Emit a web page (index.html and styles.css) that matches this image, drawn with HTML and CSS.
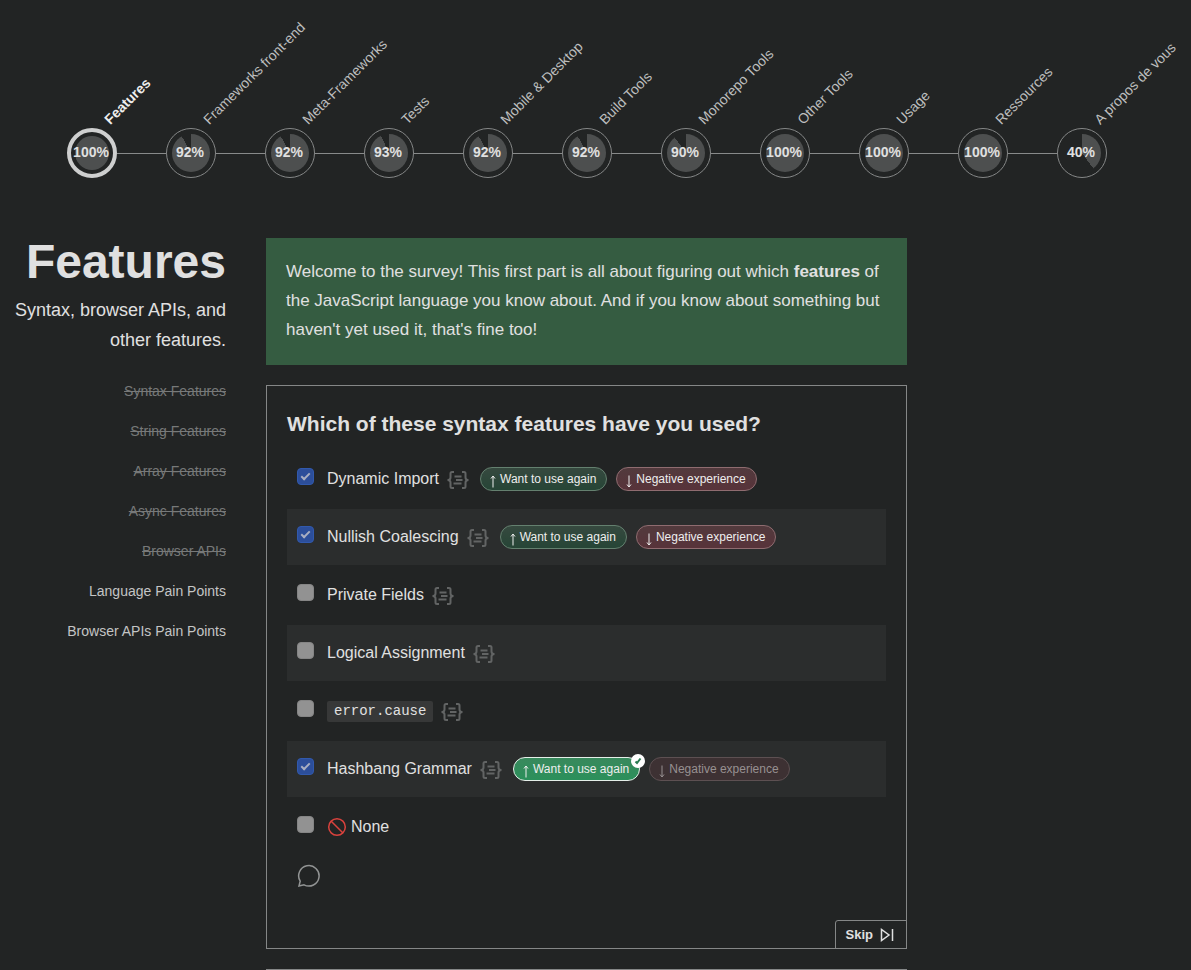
FILE: index.html
```html
<!DOCTYPE html>
<html lang="fr">
<head>
<meta charset="utf-8">
<meta name="viewport" content="width=device-width, initial-scale=1">
<title>Features</title>
<link rel="stylesheet" href="styles.css">
</head>
<body>
<svg class="sprite" aria-hidden="true">
  <symbol id="braces" viewBox="0 0 22 18"><path d="M7 1H5Q3.500 1 3.500 2.500V6.500Q3.500 9 0.500 9Q3.500 9 3.500 11.500V15.500Q3.500 17 5 17H7M15 1H17Q18.500 1 18.500 2.500V6.500Q18.500 9 21.500 9Q18.500 9 18.500 11.500V15.500Q18.500 17 17 17H15M7.500 5.500H14.500M9 9H15.500M6.500 12.500H14.500"/></symbol>
  <symbol id="up" viewBox="0 0 6 13"><path d="M3 12.500V1M1 3.500L3 1L5 3.500"/></symbol>
  <symbol id="down" viewBox="0 0 6 13"><path d="M3 0.500V12M1 9.500L3 12L5 9.500"/></symbol>
</svg>

<nav class="steps" aria-label="Sections">
  <ol class="steps-list">
    <li class="step current"><a href="#features"><span class="step-name">Features</span><span class="ring"><span class="pie full"></span><span class="percent">100%</span></span></a></li>
    <li class="step"><a href="#frontend"><span class="step-name">Frameworks front-end</span><span class="ring"><span class="pie p92"></span><span class="percent">92%</span></span></a></li>
    <li class="step"><a href="#meta"><span class="step-name">Meta-Frameworks</span><span class="ring"><span class="pie p92"></span><span class="percent">92%</span></span></a></li>
    <li class="step"><a href="#tests"><span class="step-name">Tests</span><span class="ring"><span class="pie p93"></span><span class="percent">93%</span></span></a></li>
    <li class="step"><a href="#mobile"><span class="step-name">Mobile &amp; Desktop</span><span class="ring"><span class="pie p92"></span><span class="percent">92%</span></span></a></li>
    <li class="step"><a href="#build"><span class="step-name">Build Tools</span><span class="ring"><span class="pie p92"></span><span class="percent">92%</span></span></a></li>
    <li class="step"><a href="#monorepo"><span class="step-name">Monorepo Tools</span><span class="ring"><span class="pie p90"></span><span class="percent">90%</span></span></a></li>
    <li class="step"><a href="#other"><span class="step-name">Other Tools</span><span class="ring"><span class="pie full"></span><span class="percent">100%</span></span></a></li>
    <li class="step"><a href="#usage"><span class="step-name">Usage</span><span class="ring"><span class="pie full"></span><span class="percent">100%</span></span></a></li>
    <li class="step"><a href="#resources"><span class="step-name">Ressources</span><span class="ring"><span class="pie full"></span><span class="percent">100%</span></span></a></li>
    <li class="step"><a href="#about"><span class="step-name">A propos de vous</span><span class="ring"><span class="pie p40"></span><span class="percent">40%</span></span></a></li>
  </ol>
</nav>

<div class="layout">
  <aside class="sidebar">
    <h1>Features</h1>
    <p class="summary">Syntax, browser APIs, and other features.</p>
    <ul class="toc">
      <li><a class="done" href="#syntax">Syntax Features</a></li>
      <li><a class="done" href="#string">String Features</a></li>
      <li><a class="done" href="#array">Array Features</a></li>
      <li><a class="done" href="#async">Async Features</a></li>
      <li><a class="done" href="#browser">Browser APIs</a></li>
      <li><a href="#language-pain">Language Pain Points</a></li>
      <li><a href="#browser-pain">Browser APIs Pain Points</a></li>
    </ul>
  </aside>

  <main class="content">
    <p class="intro">Welcome to the survey! This first part is all about figuring out which <strong>features</strong> of the JavaScript language you know about. And if you know about something but haven't yet used it, that's fine too!</p>

    <section class="question" id="syntax">
      <h2>Which of these syntax features have you used?</h2>
      <ul class="options">
        <li class="option">
          <input type="checkbox" id="o1" checked><label for="o1">Dynamic Import</label>
          <svg class="braces"><use href="#braces"/></svg>
          <span class="feedback">
            <button class="pill good" type="button"><svg class="arrow"><use href="#up"/></svg>Want to use again</button>
            <button class="pill bad" type="button"><svg class="arrow"><use href="#down"/></svg>Negative experience</button>
          </span>
        </li>
        <li class="option">
          <input type="checkbox" id="o2" checked><label for="o2">Nullish Coalescing</label>
          <svg class="braces"><use href="#braces"/></svg>
          <span class="feedback">
            <button class="pill good" type="button"><svg class="arrow"><use href="#up"/></svg>Want to use again</button>
            <button class="pill bad" type="button"><svg class="arrow"><use href="#down"/></svg>Negative experience</button>
          </span>
        </li>
        <li class="option">
          <input type="checkbox" id="o3"><label for="o3">Private Fields</label>
          <svg class="braces"><use href="#braces"/></svg>
        </li>
        <li class="option">
          <input type="checkbox" id="o4"><label for="o4">Logical Assignment</label>
          <svg class="braces"><use href="#braces"/></svg>
        </li>
        <li class="option">
          <input type="checkbox" id="o5"><label for="o5"><code>error.cause</code></label>
          <svg class="braces"><use href="#braces"/></svg>
        </li>
        <li class="option">
          <input type="checkbox" id="o6" checked><label for="o6">Hashbang Grammar</label>
          <svg class="braces"><use href="#braces"/></svg>
          <span class="feedback">
            <button class="pill good selected" type="button"><svg class="arrow"><use href="#up"/></svg>Want to use again<span class="badge"><svg viewBox="0 0 14 14"><path d="M4.500 7.500L6 9L9.500 4.500"/></svg></span></button>
            <button class="pill bad faded" type="button"><svg class="arrow"><use href="#down"/></svg>Negative experience</button>
          </span>
        </li>
        <li class="option">
          <input type="checkbox" id="o7"><label for="o7" class="none"><svg class="forbidden" viewBox="0 0 20 20"><circle cx="10" cy="10" r="8.300"/><path d="M4 4L16 16"/></svg>None</label>
        </li>
      </ul>
      <button class="comment" type="button" aria-label="Comment"><svg viewBox="0 0 24 24"><path d="M2 22L3.200 17.200A10.200 10.200 0 1 1 7 20.800Z"/></svg></button>
      <button class="skip" type="button">Skip<svg viewBox="0 0 14 14"><path d="M1.500 1.500V12.500L9 7ZM12.500 1V13"/></svg></button>
    </section>
    <section class="question next"></section>
  </main>
</div>
</body>
</html>
```

FILE: styles.css
```css
*, *::before { box-sizing: border-box; }

body {
  margin: 0;
  background: #222424;
  color: #e0e0e0;
  font-family: "Liberation Sans", Arial, sans-serif;
}

a { color: inherit; text-decoration: none; }
ul, ol { list-style: none; margin: 0; padding: 0; }
button { font-family: inherit; color: inherit; }
.sprite { display: none; }

.steps { padding: 128px 67px 60px; }
.steps-list { display: flex; }
.step { display: flex; align-items: center; }
.step a { position: relative; display: block; }
.step + .step::before { content: ""; width: 49px; height: 1px; background: #888a8a; }
.ring {
  display: grid;
  place-items: center;
  width: 50px;
  height: 50px;
  padding: 5px;
  border: 1px solid #858787;
  border-radius: 50%;
}
.pie { grid-area: 1 / 1; width: 38px; height: 38px; border-radius: 50%; background: #4d4f4f; }
.p92 { background: conic-gradient(#4d4f4f 92%, transparent 0); }
.p93 { background: conic-gradient(#4d4f4f 93%, transparent 0); }
.p90 { background: conic-gradient(#4d4f4f 90%, transparent 0); }
.p40 { background: conic-gradient(#4d4f4f 40%, transparent 0); }
.percent { grid-area: 1 / 1; font-size: 14px; font-weight: bold; line-height: 16px; padding: 0 2px 2px 0; }
.current .ring { border: 4px solid #cecfcf; padding: 4px; }
.current .pie { width: 34px; height: 34px; }
.current .percent { justify-self: center; margin: 0 -2px; }
.step-name {
  position: absolute;
  left: 46px;
  bottom: 50px;
  transform: rotate(-45deg);
  transform-origin: 0 100%;
  white-space: nowrap;
  font-size: 14px;
  line-height: 18px;
  color: #bdbebe;
}
.current .step-name { font-weight: bold; color: #eeeeee; }

.layout {
  display: grid;
  grid-template-columns: 212px minmax(0, 1fr) 224px;
  column-gap: 40px;
  padding: 0 20px 0 14px;
}

.sidebar { text-align: right; }
.sidebar h1 { margin: 0; font-size: 48px; line-height: 48px; }
.summary { margin: 9px 0 28px; font-size: 18px; line-height: 30px; }
.toc { display: grid; row-gap: 24px; font-size: 14px; line-height: 16px; color: #c4c5c5; }
.toc li { height: 16px; }
.done { color: #777979; text-decoration: line-through; }

.intro {
  margin: 0 0 20px;
  padding: 19px 20px 21px;
  background: #355c41;
  font-size: 17px;
  line-height: 29px;
}

.question {
  display: flex;
  flex-direction: column;
  border: 1px solid #858787;
  padding: 20px 20px 0;
  margin-bottom: 20px;
}
.question h2 { margin: 0 0 9px; font-size: 21px; line-height: 36px; }
.options { display: grid; row-gap: 2px; }
.option {
  display: flex;
  align-items: center;
  height: 56px;
  padding: 0 10px;
  font-size: 16px;
}
.option:nth-child(even) { background: #2b2d2d; }
.option input {
  appearance: none;
  width: 17px;
  height: 17px;
  margin: 0 13px 5px 0;
  border: 1px solid #858585;
  border-radius: 4px;
  background: #929292;
}
.option input:checked {
  display: grid;
  place-items: center;
  border-color: #3159ad;
  background: #2c4e9a;
}
.option input:checked::before {
  content: "";
  width: 9px;
  height: 5px;
  margin-bottom: 3px;
  border: solid #a9afc2;
  border-width: 0 0 2px 2px;
  transform: rotate(-45deg);
}
.option label { line-height: 20px; }
.option code {
  display: block;
  padding: 0 7px;
  border-radius: 2px;
  background: #373838;
  font-family: "Liberation Mono", monospace;
  font-size: 14px;
  line-height: 21px;
}
.braces {
  width: 22px;
  height: 18px;
  margin: 2px 0 0 8px;
  fill: none;
  stroke: #626464;
  stroke-width: 2;
}
.feedback { display: flex; gap: 9px; margin-left: 11px; }
.pill {
  position: relative;
  display: flex;
  align-items: center;
  gap: 4px;
  height: 24px;
  padding: 0 10px 0 9px;
  border: 1px solid;
  border-radius: 12px;
  font-size: 12px;
  line-height: 14px;
  color: #eeeeee;
}
.good { background: linear-gradient(#36493f, #264536); border-color: #64806f; }
.bad { background: linear-gradient(#523a3d, #58333a); border-color: #8f6c70; }
.selected { background: linear-gradient(#39895d, #2b905b); border-color: #e5efe9; }
.faded { background: #3d3133; border-color: #5d5052; color: #979091; }
.arrow { width: 6px; height: 13px; margin-top: 4px; fill: none; stroke: currentColor; }
.badge {
  position: absolute;
  right: -6px;
  top: -4px;
  width: 14px;
  height: 14px;
  border-radius: 50%;
  background: #ffffff;
}
.badge svg { display: block; fill: none; stroke: #287a50; stroke-width: 2; }
.none { display: flex; align-items: center; gap: 4px; }
.forbidden { width: 20px; height: 20px; fill: none; stroke: #d9423d; stroke-width: 1.500; }

.comment {
  width: 24px;
  height: 24px;
  margin: 9px 10px 32px;
  padding: 0;
  border: 0;
  background: none;
}
.comment svg { display: block; fill: none; stroke: #929494; stroke-width: 1.500; }
.skip {
  display: flex;
  align-items: center;
  gap: 7px;
  align-self: flex-end;
  height: 29px;
  margin: 0 -21px -1px 0;
  padding: 0 12px 0 10px;
  border: 1px solid #858787;
  border-radius: 3px 0 0 0;
  background: none;
  font-size: 13px;
  font-weight: bold;
}
.skip svg { width: 14px; height: 14px; fill: none; stroke: currentColor; stroke-width: 1.500; }
.next { padding: 0; margin: 0; border-width: 1px 0 0; }
```
